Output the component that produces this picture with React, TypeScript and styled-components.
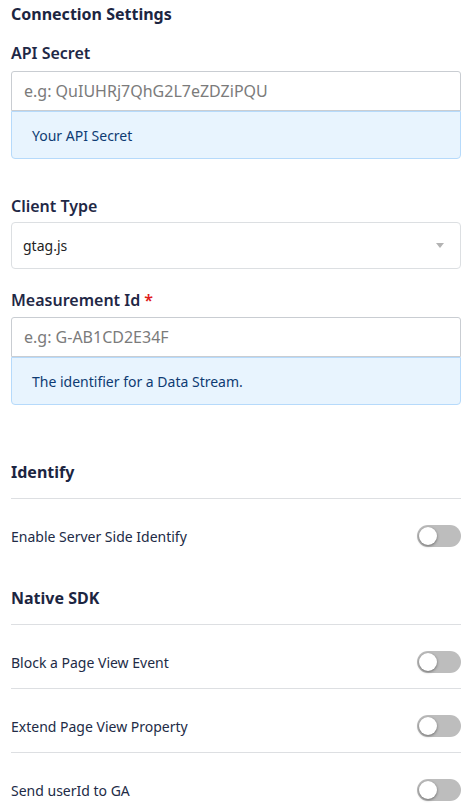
import React from "react";
import styled, { createGlobalStyle } from "styled-components";

const Global = createGlobalStyle`
  html, body { margin: 0; padding: 0; background: #ffffff; }
  body { font-family: "Noto Sans", "Open Sans", sans-serif; }
  * { box-sizing: border-box; }
`;

const Page = styled.div`
  width: 471px;
  padding: 2px 10px 0 11px;
  display: flex;
  flex-direction: column;
`;

const SectionTitle = styled.div<{ $top?: number }>`
  font-size: 16px;
  line-height: 24px;
  font-weight: 700;
  color: #1c2541;
  margin-top: ${(p) => p.$top ?? 0}px;
`;

const Field = styled.div<{ $top: number }>`
  display: flex;
  flex-direction: column;
  margin-top: ${(p) => p.$top}px;
`;

const Label = styled.label<{ $gap: number }>`
  font-size: 16px;
  line-height: 24px;
  font-weight: 600;
  color: #1f2846;
  margin-bottom: ${(p) => p.$gap}px;
`;

const Required = styled.span`
  color: #e01b1b;
  margin-left: 4px;
`;

const TextInput = styled.input`
  height: 40px;
  width: 100%;
  border: 1px solid #c9cdd2;
  border-radius: 3px 3px 0 0;
  padding: 0 12px;
  font-family: "Noto Sans", "Open Sans", sans-serif;
  font-size: 16px;
  color: #222;
  outline: none;
  &::placeholder { color: #7b7b7b; }
`;

const Help = styled.div`
  height: 48px;
  background: #e8f4fe;
  border: 1px solid #b6dafb;
  border-radius: 0 0 4px 4px;
  padding: 0 20px;
  display: flex;
  align-items: center;
  font-size: 14px;
  color: #0e3b73;
`;

const SelectBox = styled.div`
  height: 47px;
  border: 1px solid #dcdfe2;
  border-radius: 4px;
  padding: 0 16px 0 11px;
  display: flex;
  align-items: center;
  justify-content: space-between;
  font-size: 14px;
  color: #232323;
`;

const Caret = styled.span`
  width: 0;
  height: 0;
  border-left: 4.5px solid transparent;
  border-right: 4.5px solid transparent;
  border-top: 5px solid #b3b3b3;
`;

const Divider = styled.div`
  height: 1px;
  background: #dddfe2;
  margin-top: 14px;
`;

const Row = styled.div<{ $divider?: boolean }>`
  display: flex;
  align-items: center;
  justify-content: space-between;
  padding: 26px 0 15px;
  border-top: ${(p) => (p.$divider ? "1px solid #dddfe2" : "none")};
  font-size: 14px;
  color: #222b46;
`;

const Track = styled.div`
  position: relative;
  width: 44px;
  height: 22px;
  border-radius: 11px;
  background: #bdbdbd;
`;

const Knob = styled.div`
  position: absolute;
  left: 2px;
  top: 2px;
  width: 18px;
  height: 18px;
  border-radius: 50%;
  background: #ffffff;
  box-shadow: 0 1px 3px rgba(0, 0, 0, 0.45);
`;

const Toggle = () => (
  <Track>
    <Knob />
  </Track>
);

export default function App() {
  return (
    <>
      <Global />
      <Page>
        <SectionTitle>Connection Settings</SectionTitle>

        <Field $top={15}>
          <Label $gap={6}>API Secret</Label>
          <TextInput placeholder="e.g: QuIUHRj7QhG2L7eZDZiPQU" />
          <Help>Your API Secret</Help>
        </Field>

        <Field $top={35}>
          <Label $gap={4}>Client Type</Label>
          <SelectBox>
            <span>gtag.js</span>
            <Caret />
          </SelectBox>
        </Field>

        <Field $top={19}>
          <Label $gap={5}>
            Measurement Id<Required>*</Required>
          </Label>
          <TextInput placeholder="e.g: G-AB1CD2E34F" />
          <Help>The identifier for a Data Stream.</Help>
        </Field>

        <SectionTitle $top={55}>Identify</SectionTitle>
        <Divider />
        <Row>
          <span>Enable Server Side Identify</span>
          <Toggle />
        </Row>

        <SectionTitle $top={24}>Native SDK</SectionTitle>
        <Divider />
        <Row>
          <span>Block a Page View Event</span>
          <Toggle />
        </Row>
        <Row $divider>
          <span>Extend Page View Property</span>
          <Toggle />
        </Row>
        <Row $divider>
          <span>Send userId to GA</span>
          <Toggle />
        </Row>
      </Page>
    </>
  );
}
